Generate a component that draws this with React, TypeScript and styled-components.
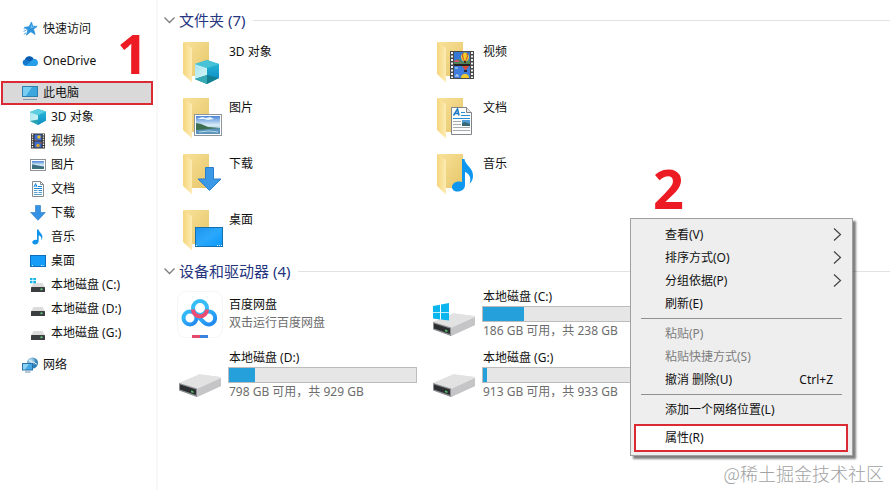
import React from "react";
import styled, { createGlobalStyle, css } from "styled-components";

const GlobalStyle = createGlobalStyle`
  *, *::before, *::after { box-sizing: border-box; }
  html, body { margin: 0; background: #fff; }
  body, button {
    font-family: "Noto Sans", "Noto Sans CJK SC", sans-serif;
    font-size: 12px;
    line-height: 18px;
    color: #111;
  }
  button { margin: 0; padding: 0; border: 0; background: none; text-align: left; cursor: default; }
  svg { display: block; flex: none; }
`;

const accent = "#dc2a35";

const Window = styled.div`
  position: relative;
  display: flex;
  min-height: 100vh;
  background: #fff;
  overflow: hidden;
`;

const Sidebar = styled.nav`
  width: 158px;
  flex: none;
  display: flex;
  flex-direction: column;
  gap: 8px;
  padding: 17px 3px 16px 1px;
  border-right: 2px solid #f8f8f9;
`;

const NavGroup = styled.div`
  display: flex;
  flex-direction: column;
`;

const NavItem = styled.button<{ $child?: boolean; $current?: boolean }>`
  display: flex;
  align-items: center;
  gap: 5px;
  height: 24px;
  padding-left: ${(p) => (p.$child ? 29 : 21)}px;
  white-space: nowrap;
  ${(p) =>
    p.$current &&
    css`
      background: #d9d9d9;
      outline: 2px solid ${accent};
      outline-offset: -2px;
    `}
`;

const Content = styled.main`
  flex: 1;
  min-width: 0;
  padding: 10px 0 16px 6px;
`;

const Section = styled.section`
  & + & { margin-top: 6px; }
`;

const SectionHeader = styled.h2`
  display: flex;
  align-items: center;
  gap: 8px;
  margin: 0;
  font-weight: 400;
  &::after {
    content: "";
    flex: 1;
    height: 1px;
    background: #e2e2e2;
  }
`;

const SectionToggle = styled.button`
  display: flex;
  align-items: center;
  gap: 4px;
  font-size: 15px;
  line-height: 20px;
  color: #26357f;
  white-space: nowrap;
`;

const TileGrid = styled.div`
  display: grid;
  grid-template-columns: repeat(auto-fill, 254px);
  gap: 8px 0;
  padding: 9px 0 0 13px;
`;

const DriveGrid = styled(TileGrid)`
  gap: 9px 0;
  padding-top: 7px;
`;

const Tile = styled.button<{ $top?: boolean }>`
  display: flex;
  align-items: ${(p) => (p.$top ? "flex-start" : "center")};
  gap: 4px;
`;

const FolderName = styled.span`
  padding-top: 4px;
`;

const DriveInfo = styled.span`
  display: flex;
  flex-direction: column;
  width: 189px;
  margin-left: -1px;
  white-space: nowrap;
`;

const DriveText = styled.span<{ $muted?: boolean }>`
  padding-left: 1px;
  color: ${(p) => (p.$muted ? "#6d6d6d" : "#111")};
`;

const Meter = styled.span`
  display: block;
  height: 16px;
  border: 1px solid #bcbcbc;
  background: #e6e6e6;
`;

const MeterFill = styled.span`
  display: block;
  height: 100%;
  background: #26a0da;
`;

const Menu = styled.div`
  position: absolute;
  top: 218px;
  right: 37px;
  width: 223px;
  display: flex;
  flex-direction: column;
  padding: 4px 4px 3px 3px;
  background: #eee;
  border: 1px solid #a0a0a0;
  box-shadow: 3px 3px 2px rgba(0, 0, 0, 0.5);
`;

const MenuItem = styled.button<{ $marked?: boolean }>`
  display: flex;
  align-items: center;
  justify-content: space-between;
  height: 23px;
  padding: 0 6px 0 31px;
  white-space: nowrap;
  &:disabled { color: #7d7d7d; }
  ${(p) =>
    p.$marked &&
    css`
      height: 28px;
      margin-top: 3px;
      background: #fff;
      outline: 2px solid ${accent};
      outline-offset: -2px;
    `}
`;

const Shortcut = styled.kbd`
  font: inherit;
  padding-right: 9px;
`;

const MenuRule = styled.hr`
  width: 201px;
  height: 1px;
  margin: 3px 7px;
  border: 0;
  background: #919191;
`;

const Callout = styled.span<{ $x: number; $y: number }>`
  position: absolute;
  left: ${(p) => p.$x}px;
  top: ${(p) => p.$y}px;
  font-family: "Open Sans", sans-serif;
  font-size: 54px;
  line-height: 54px;
  font-weight: 700;
  color: #ed1c24;
`;

const Watermark = styled.span`
  position: absolute;
  right: 6px;
  bottom: 4px;
  font-family: "Noto Sans CJK SC", sans-serif;
  font-weight: 300;
  font-size: 18px;
  line-height: 26px;
  color: #a2a2a2;
`;

type Kind =
  | "star" | "cloud" | "pc" | "cube" | "video" | "picture" | "doc"
  | "download" | "music" | "desktop" | "driveC" | "drive" | "network";

const GradientSheet = styled.svg`
  position: absolute;
`;

const Defs = () => (
  <GradientSheet width="0" height="0" aria-hidden>
    <defs>
      <linearGradient id="flap" x1="0" x2="1">
        <stop offset="0" stopColor="#f6d67c" />
        <stop offset="1" stopColor="#fcecb4" />
      </linearGradient>
      <linearGradient id="back" x1="0" x2="1" y2="1">
        <stop offset="0" stopColor="#f9e19a" />
        <stop offset="1" stopColor="#e6c668" />
      </linearGradient>
      <linearGradient id="screen" x1="0" x2="1" y2="1">
        <stop offset="0" stopColor="#1e93ee" />
        <stop offset="0.5" stopColor="#2ba8fb" />
        <stop offset="1" stopColor="#0b98fa" />
      </linearGradient>
      <linearGradient id="sky" x2="0" y2="1">
        <stop offset="0" stopColor="#4b86d6" />
        <stop offset="0.5" stopColor="#d8ecf8" />
        <stop offset="1" stopColor="#6e9fc4" />
      </linearGradient>
      <linearGradient id="cubeL" x1="0" x2="1" y2="1">
        <stop offset="0" stopColor="#a9e6ef" />
        <stop offset="1" stopColor="#d6f6f8" />
      </linearGradient>
      <linearGradient id="cubeR" x2="0" y2="1">
        <stop offset="0" stopColor="#27b5d6" />
        <stop offset="1" stopColor="#0d8dc4" />
      </linearGradient>
      <linearGradient id="metal" x1="0" x2="1" y2="1">
        <stop offset="0" stopColor="#f2f2f2" />
        <stop offset="1" stopColor="#bfbfc1" />
      </linearGradient>
      <linearGradient id="ring" x1="0" x2="1" y2="1">
        <stop offset="0" stopColor="#35c3fb" />
        <stop offset="1" stopColor="#2185ee" />
      </linearGradient>
      <radialGradient id="globe" cx="0.35" cy="0.3">
        <stop offset="0" stopColor="#d4eef9" />
        <stop offset="1" stopColor="#2f7fb5" />
      </radialGradient>
    </defs>
  </GradientSheet>
);

function SmallDrive() {
  return (
    <>
      <path d="M3.5 6h9L15 10.500H1z" fill="#dcdcdc" />
      <rect x="1" y="10" width="14" height="5" rx="0.6" fill="#3b3d3f" />
      <rect x="10.5" y="11.500" width="2" height="1.6" fill="#5fe08a" />
    </>
  );
}

const small: Record<Kind, React.ReactNode> = {
  star: (
    <>
      <path d="M9.5 1l1.2 4.2 4.5.2-3.7 2.8 1.6 5.3-4.3-2.8-4.3 3.4 1.4-5L2.4 6.3l4.7-.6z" fill="#2f93dc" stroke="#2f93dc" strokeWidth="0.800" />
      <path d="M9.3 3l.8 3 3 .2-4.5 1z" fill="#7cc4f2" />
      <path d="M1.5 10.5l3-1.5M1.8 13.2l2.4-1.4M1.6 8l2-.6" stroke="#5caee6" strokeWidth="1" />
    </>
  ),
  cloud: (
    <>
      <path d="M3.8 13A3.4 3.4 0 0 1 3 6.4 4.8 4.8 0 0 1 11.8 6 3.6 3.6 0 0 1 13 13z" fill="#1379cc" />
      <path d="M3 6.4A4.8 4.8 0 0 1 11.6 6L8 8.2z" fill="#0b5cae" />
      <path d="M3 13l6-4.8L11.6 6A3.5 3.5 0 0 1 13 13z" fill="#279fe8" />
    </>
  ),
  pc: (
    <>
      <rect x="0.5" y="1.5" width="15" height="10" fill="#3da7dd" stroke="#2d7fae" />
      <path d="M1 2h9L4 11H1z" fill="#79cdf0" />
      <path d="M1 14.5h14" stroke="#8296a6" />
    </>
  ),
  cube: (
    <>
      <path d="M8 0l8 2.6v9L8 16 0 12V3z" fill="#38b8cf" />
      <path d="M0 3l8 3v10l-8-4z" fill="url(#cubeL)" />
      <path d="M8 6l8-3.4v9L8 16z" fill="url(#cubeR)" />
      <path d="M0 3l8-3 8 2.6L8 6z" fill="#5bcfe0" />
      <path d="M0 12l8-1.5V16z" fill="#29a3b2" />
    </>
  ),
  video: (
    <>
      <rect x="1" y="0.5" width="14" height="15" fill="#333" />
      <path d="M2.5 1v14M13.5 1v14" stroke="#eee" strokeWidth="1.4" strokeDasharray="1.4 1" />
      <rect x="4.5" y="1.5" width="7" height="6" fill="#3c6fd0" />
      <rect x="4.5" y="8.5" width="7" height="6" fill="#3c6fd0" />
      <circle cx="9" cy="4" r="1.7" fill="#e7c02d" />
      <circle cx="8" cy="12.5" r="1.7" fill="#e0a52d" />
      <path d="M4.5 6.2l4 1.3h-4zM9 9h2.5v2z" fill="#a65a3b" />
    </>
  ),
  picture: (
    <>
      <rect x="0.5" y="2.5" width="15" height="11" fill="#fff" stroke="#8c9196" />
      <rect x="2" y="4" width="12" height="8" fill="url(#sky)" />
      <path d="M2 7.4c3 0 5 1.2 12 2v2.600H2z" fill="#3c6f80" />
    </>
  ),
  doc: (
    <>
      <path d="M2.500.5h8l3 3v12h-11z" fill="#fff" stroke="#868b90" />
      <path d="M10.500.5v3h3" fill="none" stroke="#868b90" />
      <path d="M4 6l1.600-3.500L7 6M4.600 5h2M8 5.500h4M4 7.500h8M8.500 9.500H12" stroke="#1b86d8" fill="none" />
      <path d="M4 9.500h3.500M4 11.500h3.500M4 13.500h8M8.500 11.500H12" stroke="#5b9fce" />
    </>
  ),
  download: <path d="M5.500.5h5v7h4.800L8 15.300.7 7.500h4.800z" fill="#3592e4" stroke="#2475c0" strokeWidth="0.600" />,
  music: (
    <path
      d="M7 .5h1.600c.3 3.200 5 4.400 3.600 9-.2.8-.6 1.300-1 1.700.8-3-.6-4.200-2.500-5V12c0 2-1.600 3.400-3.700 3.400-1.700 0-2.700-.9-2.700-2.100 0-1.500 1.700-2.600 3.300-2.600.600 0 1 .1 1.400.2z"
      fill="#0f93ea"
    />
  ),
  desktop: (
    <>
      <rect x="0.500" y="2.500" width="15" height="11" fill="#159bf8" stroke="#0c6fbd" />
      <path d="M2 12.500h1M11 12.500h3" stroke="#cdeaff" strokeWidth="1" strokeDasharray="1 .6" />
    </>
  ),
  driveC: (
    <>
      <SmallDrive />
      <path d="M0 1h2.500v2.300H0zM3.300 1H6v2.300H3.300zM0 4h2.500v2.300H0zM3.300 4H6v2.300H3.300z" fill="#18b4ea" />
    </>
  ),
  drive: <SmallDrive />,
  network: (
    <>
      <circle cx="10.500" cy="6" r="5.500" fill="url(#globe)" />
      <path d="M7 3c2 1 2 3 4 2s2 3 4 2" stroke="#e4f5fb" fill="none" />
      <rect x="0.500" y="6.500" width="10" height="6.500" fill="#45a9e6" stroke="#2a72a8" />
      <path d="M1 7h6l-4 5.500H1z" fill="#8dd2f6" />
      <path d="M3 15h5.500" stroke="#6f8fa6" />
    </>
  ),
};

const SmallIcon = ({ kind }: { kind: Kind }) => (
  <svg width="16" height="16" viewBox="0 0 16 16" aria-hidden>{small[kind]}</svg>
);

const overlays: Partial<Record<Kind, React.ReactNode>> = {
  cube: (
    <>
      <path d="M30 21l12 4v14l-12 6-12-5V25z" fill="#3fb9cd" />
      <path d="M18 25l12 4v12l-12-1z" fill="url(#cubeL)" />
      <path d="M30 29l12-4v14l-12 2z" fill="url(#cubeR)" />
      <path d="M18 40l12-4 12 3-12 6z" fill="#137f92" />
      <path d="M18 40l12-4v9z" fill="#35a9b4" />
      <path d="M18 25l12-4 12 4-12 4z" fill="#48c2d6" />
    </>
  ),
  video: (
    <>
      <rect x="19" y="12" width="24" height="28" fill="#484848" />
      <path d="M21 13v26M41 13v26" stroke="#f2f2f2" strokeWidth="2" strokeDasharray="2 1.500" />
      <rect x="23" y="13" width="16" height="12" fill="#3478d4" />
      <rect x="23" y="27" width="16" height="12" fill="#3e7ddb" />
      <path d="M23 22l5-2 4 3 7-2v4H23z" fill="#52845a" />
      <path d="M23 22l3-1.500 3 2.500h-6z" fill="#d65266" />
      <ellipse cx="34" cy="18" rx="4" ry="4.500" fill="#f3cf2e" />
      <path d="M32 14c-1 3 0 6 1.500 8M36 14c1 3 0 6-1.500 8" stroke="#c03a2c" fill="none" />
      <path d="M33 22h2v2h-2z" fill="#43331a" />
      <path d="M31 27h7l-3 4h-1z" fill="#d94a34" />
      <path d="M33 31h3v2h-3z" fill="#2a2540" />
      <path d="M30 39a4 4 0 0 1 8 0z" fill="#f2c92e" />
      <path d="M24 37h4M25 36h2M24 29h3" stroke="#c7e0f9" />
      <path d="M23 26h16" stroke="#191919" strokeWidth="1.500" />
    </>
  ),
  picture: (
    <>
      <rect x="17.500" y="19.500" width="27" height="21" fill="#fff" stroke="#8e969c" />
      <rect x="19" y="21" width="24" height="18" fill="url(#sky)" />
      <path d="M20 24l5-2 4 1 4-1 4 2-6 1-4-1z" fill="#e8f5fd" />
      <path d="M19 28l5 1 7 3 12 1v1l-24 2z" fill="#3c6e4f" />
      <path d="M19 35l12-1 12-1v6H19z" fill="#5b93bb" />
      <path d="M22 37l10-1 9 1" stroke="#b4d9ea" fill="none" />
    </>
  ),
  doc: (
    <>
      <path d="M20.500 12.500h15l5 5v22h-20z" fill="#fdfdfd" stroke="#818488" />
      <path d="M35.500 12.500v5h5" fill="#e9e9e9" stroke="#818488" />
      <path d="M22.500 20.500l4-6.500 1.500 6.500M24 18.500h3.500" stroke="#1b79c5" strokeWidth="1.500" fill="none" />
      <path d="M30 17.500h4M30 20.500h9M22 23.500h17" stroke="#2a8bd0" />
      <path d="M22 26.500h8M22 29.500h8M22 32.500h17M22 35.500h17" stroke="#a6abb0" />
      <rect x="31" y="25" width="8" height="6" fill="#4f9bd6" />
      <path d="M31 28l3-1 5 2v2h-8z" fill="#356774" />
    </>
  ),
  download: <path d="M28.500 16.500h8V28h7.500L32.500 39.500 21 28h7.500z" fill="#3b98e6" stroke="#2b7fca" />,
  music: (
    <path
      d="M31 8h2.500c.5 6 9 9 8.500 17 0 3.500-1.500 6-3.500 7.500 2-5 .5-9.500-4.500-11.500v13c0 4-3.200 6.500-7.500 6.500-3.500 0-5.500-2-5.500-4.500 0-3.300 3.500-5.500 7-5.500 1.200 0 2.200.2 3 .6z"
      fill="#0d97ee"
    />
  ),
  desktop: (
    <>
      <rect x="18.500" y="20.500" width="27" height="19" fill="url(#screen)" stroke="#146fae" />
      <path d="M19 38.500h1M40 38.500h5" stroke="#d9f1ff" strokeDasharray="1 1" />
    </>
  ),
};

const FolderIcon = ({ kind }: { kind: Kind }) => (
  <svg width="48" height="48" viewBox="0 0 48 48" aria-hidden>
    <path d="M7 3h25v34H14z" fill="url(#back)" />
    <path d="M6 3l9 6v34.500L6 35z" fill="url(#flap)" />
    {overlays[kind]}
  </svg>
);

const DriveIcon = ({ system }: { system?: boolean }) => (
  <svg width="48" height="48" viewBox="0 0 48 48" aria-hidden>
    <path d="M2 32l20-8.500q1-.4 2 0L43 26q1 .2 1 1v8L20 46 2 39z" fill="url(#metal)" />
    <path d="M20 37.500L44 27v8L20 46z" fill="#c5c5c7" />
    <path d="M2 32l20-8.500q1-.4 2 0L43 26q1 .2 1 1L20 38z" fill="#e2e2e3" />
    <path d="M2 32l18 5.500V46L2 39.500z" fill="#8b8d8f" />
    <path d="M3 33.500l16 5v5.500L3 38.500z" fill="#2c2f31" />
    <path d="M14 39.500l2.500.8v1.800l-2.500-.8z" fill="#4fc06a" />
    {system && (
      <path d="M2 16l7-1.200v7.400H2zM10 14.600l8-1.600v9.200h-8zM2 23h7v6.600L2 28.500zM10 23h8v7.500l-8-1z" fill="#0bb6ef" />
    )}
  </svg>
);

const NetdiskIcon = () => (
  <svg width="48" height="48" viewBox="0 0 48 48" fill="none" aria-hidden>
    <rect x="0.500" y="1.500" width="45" height="46" rx="8" fill="#fff" stroke="#f5f5f7" />
    <circle cx="13" cy="28" r="6.500" stroke="url(#ring)" strokeWidth="4" />
    <path d="M17.500 23l9.500 9.500a6.500 6.500 0 1 0 .5-9.500" stroke="url(#ring)" strokeWidth="4" />
    <circle cx="23" cy="18" r="7" stroke="#36bdf8" strokeWidth="4" />
    <path d="M16 19.500a7 7 0 0 0 14 0" stroke="#ec4b72" strokeWidth="4" />
    <path d="M15 46.500h8" stroke="#e34b6d" strokeWidth="3" />
    <path d="M23 46.500h8" stroke="#3b82dd" strokeWidth="3" />
  </svg>
);

const ToggleMark = () => (
  <svg width="11" height="10" viewBox="0 0 11 10" fill="none" stroke="#7c7c7c" strokeWidth="1.300" aria-hidden>
    <path d="M.5 2.500l5 5 5-5" />
  </svg>
);

const SubmenuMark = () => (
  <svg width="9" height="14" viewBox="0 0 9 14" fill="none" stroke="#444" strokeWidth="1.200" aria-hidden>
    <path d="M1 .5L7.500 6.500 1 12.500" />
  </svg>
);

const children: [Kind, string][] = [
  ["cube", "3D 对象"],
  ["video", "视频"],
  ["picture", "图片"],
  ["doc", "文档"],
  ["download", "下载"],
  ["music", "音乐"],
  ["desktop", "桌面"],
  ["driveC", "本地磁盘 (C:)"],
  ["drive", "本地磁盘 (D:)"],
  ["drive", "本地磁盘 (G:)"],
];

const folders = children.slice(0, 7);

const drives = [
  { name: "本地磁盘 (C:)", used: 22, note: "186 GB 可用，共 238 GB", system: true },
  { name: "本地磁盘 (D:)", used: 14, note: "798 GB 可用，共 929 GB" },
  { name: "本地磁盘 (G:)", used: 2, note: "913 GB 可用，共 933 GB" },
];

export default function App() {
  return (
    <Window>
      <GlobalStyle />
      <Defs />
      <Sidebar aria-label="导航窗格">
        <NavGroup>
          <NavItem><SmallIcon kind="star" />快速访问</NavItem>
        </NavGroup>
        <NavGroup>
          <NavItem><SmallIcon kind="cloud" />OneDrive</NavItem>
        </NavGroup>
        <NavGroup>
          <NavItem $current aria-current="page"><SmallIcon kind="pc" />此电脑</NavItem>
          {children.map(([kind, label]) => (
            <NavItem $child key={label}><SmallIcon kind={kind} />{label}</NavItem>
          ))}
        </NavGroup>
        <NavGroup>
          <NavItem><SmallIcon kind="network" />网络</NavItem>
        </NavGroup>
      </Sidebar>

      <Content>
        <Section>
          <SectionHeader>
            <SectionToggle aria-expanded="true"><ToggleMark />文件夹 (7)</SectionToggle>
          </SectionHeader>
          <TileGrid>
            {folders.map(([kind, label]) => (
              <Tile $top key={label}>
                <FolderIcon kind={kind} />
                <FolderName>{label}</FolderName>
              </Tile>
            ))}
          </TileGrid>
        </Section>

        <Section>
          <SectionHeader>
            <SectionToggle aria-expanded="true"><ToggleMark />设备和驱动器 (4)</SectionToggle>
          </SectionHeader>
          <DriveGrid>
            <Tile>
              <NetdiskIcon />
              <DriveInfo>
                <DriveText>百度网盘</DriveText>
                <DriveText $muted>双击运行百度网盘</DriveText>
              </DriveInfo>
            </Tile>
            {drives.map((d) => (
              <Tile key={d.name}>
                <DriveIcon system={d.system} />
                <DriveInfo>
                  <DriveText>{d.name}</DriveText>
                  <Meter role="meter" aria-label={d.name} aria-valuemin={0} aria-valuemax={100} aria-valuenow={d.used}>
                    <MeterFill style={{ width: `${d.used}%` }} />
                  </Meter>
                  <DriveText $muted>{d.note}</DriveText>
                </DriveInfo>
              </Tile>
            ))}
          </DriveGrid>
        </Section>
      </Content>

      <Menu role="menu">
        <MenuItem role="menuitem">查看(V)<SubmenuMark /></MenuItem>
        <MenuItem role="menuitem">排序方式(O)<SubmenuMark /></MenuItem>
        <MenuItem role="menuitem">分组依据(P)<SubmenuMark /></MenuItem>
        <MenuItem role="menuitem">刷新(E)</MenuItem>
        <MenuRule />
        <MenuItem role="menuitem" disabled>粘贴(P)</MenuItem>
        <MenuItem role="menuitem" disabled>粘贴快捷方式(S)</MenuItem>
        <MenuItem role="menuitem">撤消 删除(U)<Shortcut>Ctrl+Z</Shortcut></MenuItem>
        <MenuRule />
        <MenuItem role="menuitem">添加一个网络位置(L)</MenuItem>
        <MenuItem role="menuitem" $marked>属性(R)</MenuItem>
      </Menu>

      <Callout $x={117} $y={26}>1</Callout>
      <Callout $x={653} $y={161}>2</Callout>
      <Watermark>@稀土掘金技术社区</Watermark>
    </Window>
  );
}
